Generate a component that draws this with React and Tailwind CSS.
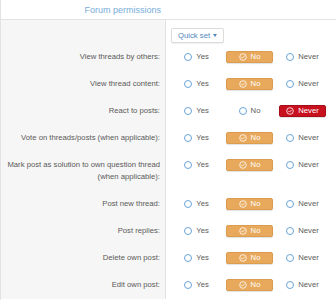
import React from "react";

const rows = [
  { label: "View threads by others:", value: "no" },
  { label: "View thread content:", value: "no" },
  { label: "React to posts:", value: "never" },
  { label: "Vote on threads/posts (when applicable):", value: "no" },
  {
    label: (
      <>
        Mark post as solution to own question thread
        <br />
        (when applicable):
      </>
    ),
    value: "no",
  },
  { label: "Post new thread:", value: "no" },
  { label: "Post replies:", value: "no" },
  { label: "Delete own post:", value: "no" },
  { label: "Edit own post:", value: "no" },
];

const options = [
  { key: "yes", text: "Yes" },
  { key: "no", text: "No" },
  { key: "never", text: "Never" },
];

function CheckCircle() {
  return (
    <svg width="8" height="8" viewBox="0 0 16 16" fill="none" stroke="white" strokeWidth="1.6">
      <circle cx="8" cy="8" r="6.6" />
      <path d="M5 8.2l2 2 4-4.2" strokeLinecap="round" strokeLinejoin="round" />
    </svg>
  );
}

function Choice({ option, selected }) {
  if (selected) {
    const colour =
      option.key === "never"
        ? "bg-[#c8101e] border-[#a50d18]"
        : "bg-[#e8a95c] border-[#dc9c4f]";
    return (
      <div
        className={`w-[47px] h-[12px] flex items-center justify-center gap-[4px] rounded-[2px] border text-white shadow-[0_1px_1px_rgba(0,0,0,0.12)] ${colour}`}
      >
        <CheckCircle />
        <span>{option.text}</span>
      </div>
    );
  }
  return (
    <div className="w-[47px] h-[12px] flex items-center justify-center gap-[4px] text-[#5a5a5a]">
      <span className="w-[8px] h-[8px] rounded-full border border-[#6aa5d6] bg-white" />
      <span>{option.text}</span>
    </div>
  );
}

export default function App() {
  return (
    <div
      className="w-[336px] h-[300px] overflow-hidden bg-white border-l border-[#e3e3e3] text-[7.7px] leading-[12px]"
      style={{ fontFamily: '"Liberation Sans", Arial, sans-serif' }}
    >
      <div className="flex h-[20px] border-b border-[#e3e3e3]">
        <div className="w-[165px] pr-[5px] flex items-center justify-end text-[9px] text-[#76acd9]">
          Forum permissions
        </div>
      </div>

      <div className="flex">
        <div className="w-[165px] shrink-0 bg-[#f6f6f6] border-r border-[#e3e3e3]" />
        <div className="pl-[5px] pt-[8px] pb-[1px]">
          <button className="h-[15px] px-[6px] flex items-center gap-[3px] rounded-[2px] border border-[#dcdcdc] bg-white text-[#4f86bd] shadow-[0_1px_1px_rgba(0,0,0,0.06)]">
            Quick set
            <span className="w-0 h-0 border-l-[2.5px] border-r-[2.5px] border-t-[3px] border-l-transparent border-r-transparent border-t-[#4f86bd]" />
          </button>
        </div>
      </div>

      {rows.map((row, i) => (
        <div key={i} className="flex">
          <div className="w-[165px] shrink-0 bg-[#f6f6f6] border-r border-[#e3e3e3] pt-[7px] pb-[8px] pr-[5px] text-right text-[#5a5a5a]">
            {row.label}
          </div>
          <div className="pl-[7px] pt-[7px] pb-[8px] flex items-start gap-[6px]">
            {options.map((o) => (
              <Choice key={o.key} option={o} selected={o.key === row.value} />
            ))}
          </div>
        </div>
      ))}
    </div>
  );
}
